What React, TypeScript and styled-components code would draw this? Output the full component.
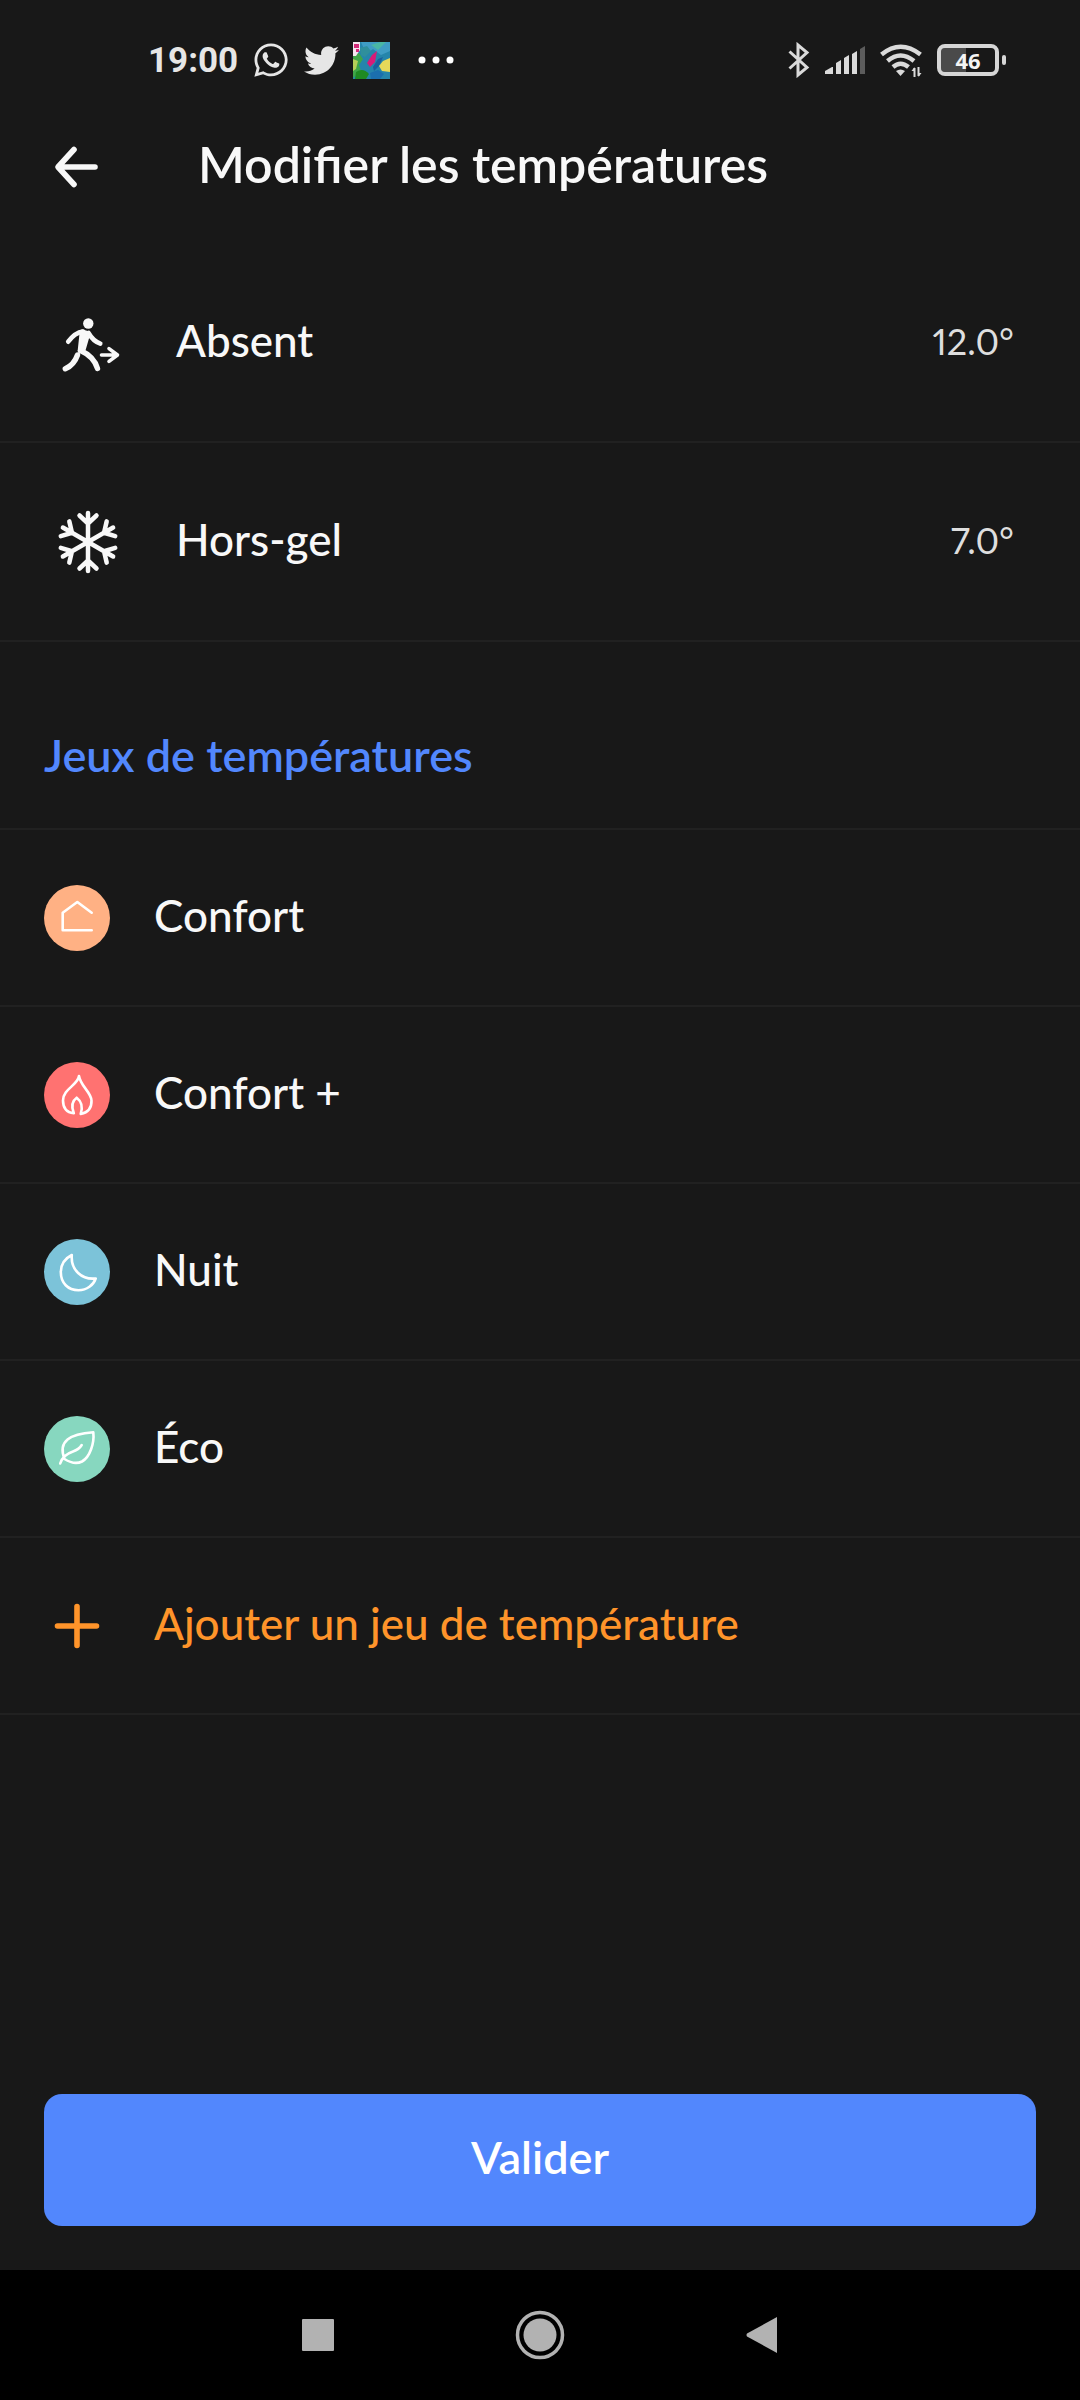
import React from "react";
import styled, { createGlobalStyle } from "styled-components";
import { FaTwitter, FaWhatsapp } from "react-icons/fa";

const GlobalStyle = createGlobalStyle`
  *, *::before, *::after { box-sizing: border-box; }
  html { background: #000; }
  body {
    margin: 0;
    background: #181818;
    color: #f8f8f8;
    font-family: Lato, "Open Sans", sans-serif;
  }
  button { font: inherit; color: inherit; background: none; border: 0; padding: 0; cursor: pointer; }
  ul { list-style: none; margin: 0; padding: 0; }
  svg { display: block; flex: none; }
`;

const Screen = styled.div`
  display: flex;
  flex-direction: column;
  min-height: 100vh;
`;

const StatusBar = styled.div`
  display: flex;
  align-items: center;
  justify-content: space-between;
  height: 120px;
  padding: 0 74px 0 148px;
  color: #e6e6e6;
`;

const StatusGroup = styled.div<{ $gap: number }>`
  display: flex;
  align-items: center;
  gap: ${(p) => p.$gap}px;
`;

const Clock = styled.time`
  padding-top: 2px;
  font: 700 35px/40px Roboto, sans-serif;
`;

const Overflow = styled.span`
  padding-left: 14px;
`;

const Battery = styled.div`
  display: flex;
  align-items: center;
  gap: 3px;
`;

const BatteryBody = styled.div`
  display: flex;
  align-items: center;
  justify-content: center;
  width: 62px;
  height: 32px;
  border: 4px solid #d6d6d6;
  border-radius: 8px;
  background: linear-gradient(90deg, #4a4a4a 46%, #181818 46%);
  background-clip: padding-box;
  font: 700 22px/24px "Noto Sans", sans-serif;
  color: #f4f4f4;
`;

const BatteryTip = styled.div`
  width: 4px;
  height: 10px;
  border-radius: 2px;
  background: #d6d6d6;
`;

const Header = styled.header`
  display: flex;
  align-items: center;
  gap: 88px;
  height: 94px;
  padding: 0 44px;
`;

const BackButton = styled.button`
  display: flex;
  width: 66px;
`;

const Title = styled.h1`
  margin: 0;
  padding-bottom: 6px;
  font-size: 50px;
  line-height: 56px;
  font-weight: 600;
`;

const PresetList = styled.ul`
  padding-top: 30px;
`;

const Item = styled.li`
  border-bottom: 2px solid #212121;
`;

const Row = styled.button<{ $tall?: boolean; $accent?: boolean }>`
  display: flex;
  align-items: center;
  gap: 44px;
  width: 100%;
  height: ${(p) => (p.$tall ? 197 : 175)}px;
  padding: 0 66px 0 44px;
  text-align: left;
  color: ${(p) => (p.$accent ? "#ff942a" : "inherit")};
`;

const Label = styled.span`
  flex: 1;
  padding-bottom: 6px;
  font-size: 44px;
  line-height: 50px;
  font-weight: 500;
`;

const Value = styled.span`
  padding-bottom: 4px;
  font-size: 36px;
  line-height: 50px;
  font-variant-numeric: proportional-nums;
  color: #dedede;
`;

const SectionTitle = styled.h2`
  margin: 0;
  padding: 88px 44px 48px;
  border-bottom: 2px solid #212121;
  font-size: 45px;
  line-height: 50px;
  font-weight: 600;
  color: #5287fd;
`;

const Badge = styled.span<{ $color: string }>`
  flex: none;
  border-radius: 50%;
  background: ${(p) => p.$color};
`;

const Footer = styled.footer`
  margin-top: auto;
  padding: 44px;
`;

const SubmitButton = styled.button`
  display: block;
  width: 100%;
  height: 132px;
  padding-bottom: 6px;
  border-radius: 18px;
  background: #5287fd;
  color: #fff;
  font-size: 45px;
  line-height: 50px;
  font-weight: 600;
`;

const NavBar = styled.nav`
  display: flex;
  align-items: center;
  justify-content: center;
  gap: 156px;
  height: 130px;
  background: #000;
`;

const NavButton = styled.button`
  display: flex;
  justify-content: center;
  width: 66px;
`;

const MapThumb = () => (
  <svg width="37" height="37" viewBox="0 0 37 37" aria-hidden="true">
    <rect width="37" height="37" fill="#2585ab" />
    <path d="M8 0h29v9l-9 4-8-6-7 5z" fill="#3f9cc4" />
    <path d="M18 3l9-3h6l-8 8z" fill="#49b6a4" />
    <path d="M7 6l7-2 4 5-6 6-4-2z" fill="#2f8f9c" />
    <path d="M0 13l6-2 4 6-4 6 2 6-8 7z" fill="#3fa548" />
    <path d="M0 17l5 2-2 8-3 2z" fill="#b6cf57" />
    <path d="M3 30q7-5 13 2l-3 5H2z" fill="#1f8a22" />
    <path d="M0 0h7v8l-4 6H0z" fill="#f4e6ef" />
    <path d="M1 2h5v4H1zM3 7h3v3H3z" fill="#d32a78" />
    <path d="M24 9l-5 4-5 8 3 4 5-5z" fill="#d81b78" />
    <path d="M20 25l5-8 5-2-4 9-5 5z" fill="#1a5f9e" />
    <path d="M30 19l7-3v14l-8-1-3-5z" fill="#e6d95a" />
    <path d="M17 31l8-3 6 4-4 5h-9z" fill="#1b6fae" />
  </svg>
);

const MoreDots = () => (
  <svg width="36" height="8" viewBox="0 0 36 8" fill="#fff" aria-hidden="true">
    <circle cx="4" cy="4" r="3.5" />
    <circle cx="18" cy="4" r="3.5" />
    <circle cx="32" cy="4" r="3.5" />
  </svg>
);

const BluetoothIcon = () => (
  <svg width="22" height="36" viewBox="0 0 22 36" fill="none" stroke="#dadada" strokeWidth="3" aria-hidden="true">
    <path d="M1.5 9.5L19 25.5 10 33V3l9 7.5L1.5 26.5" />
  </svg>
);

const SignalIcon = () => (
  <svg width="40" height="28" viewBox="0 0 40 28" fill="#dadada" aria-hidden="true">
    <path d="M0 28v-3l7-4h1v7zM11 17l5-3v14h-5zM19 12l5-3v19h-5zM27 8l5-3v23h-5z" />
    <path d="M35 3l5-3v28h-5z" fill="#5c5c5c" />
  </svg>
);

const WifiIcon = () => (
  <svg width="42" height="36" viewBox="0 0 42 36" fill="none" stroke="#dadada" strokeWidth="4.5" aria-hidden="true">
    <path d="M1.5 12.5Q20.5-3 40.5 12.5" />
    <path d="M7.5 19Q20.5 8 34 19" />
    <path d="M13 25Q20.5 18.5 28.5 25" />
    <path d="M16 29q4.5-3 9 0l-4.5 5z" fill="#dadada" stroke="none" />
    <path d="M34.5 26v9M38.5 25v9" strokeWidth="2" />
    <path d="M31.5 29l3-4v4zM41.5 31l-3 4v-4z" fill="#dadada" stroke="none" />
  </svg>
);

const BackArrow = () => (
  <svg width="66" height="66" viewBox="0 0 66 66" fill="none" stroke="#f8f8f8" strokeWidth="5.6" strokeLinecap="round" strokeLinejoin="round" aria-hidden="true">
    <path d="M51 33H15M30 15.5L14 33l16 17.5" />
  </svg>
);

const WalkerIcon = () => (
  <svg width="88" height="88" viewBox="0 0 88 88" fill="none" stroke="#f8f8f8" strokeWidth="4.6" strokeLinecap="round" strokeLinejoin="round" aria-hidden="true">
    <circle cx="44.3" cy="24.5" r="5.2" fill="#f8f8f8" stroke="none" />
    <path d="M24.2 42.7Q31 33.5 39 32.5M44.5 34Q49 42 56.3 44.6" />
    <path d="M38 32.8L44 34.5 39.5 50 36 51.5z" fill="#f8f8f8" />
    <path d="M36.5 51.5Q50 57.5 53.5 69.5M33.5 56Q30 66 21.3 69.8" strokeWidth="5.4" />
    <path d="M57.5 56H73M65 49.6L73.5 56l-8.5 6.4" strokeWidth="3.6" />
  </svg>
);

const SnowflakeIcon = () => (
  <svg width="88" height="88" viewBox="-44 -44 88 88" fill="none" stroke="#f8f8f8" strokeWidth="4.5" strokeLinecap="round" strokeLinejoin="round" aria-hidden="true">
    {[0, 60, 120, 180, 240, 300].map((angle) => (
      <path key={angle} d="M0 0V-29M-8.5-26.5L0-18.5 8.5-26.5" transform={`rotate(${angle})`} />
    ))}
  </svg>
);

const PRESET_PATHS = {
  house: "M47.7 27.7L33.3 17 18.7 27.7V45.3H47.7",
  flame:
    "M35 14C34 23 19 27 19 38.5C19 46 23 50.5 29.8 51.3C27 44 28 39 32.7 35.7C37 39 39 45 36.7 52C44 50.5 47.8 46 47.5 38.5C47 30 36.5 24 35 14z",
  moon: "M27.8 16C20 20 16.8 26 16.8 33C16.8 44 24 51.2 34.5 51.2C43 51.2 49.5 46 51.7 39.5C38 41 26.5 31 27.8 16z",
  leaf: "M16.2 47.5C18 41 23 37.5 29 35.5Q35 33.5 37.7 29M20.5 43C13.5 25 26 18 49.3 16.3C50.5 27 46 41 38 45.5C32 48.5 26 46.5 20.5 43",
};

const PresetIcon = ({ name, color }: { name: keyof typeof PRESET_PATHS; color: string }) => (
  <Badge $color={color}>
    <svg width="66" height="66" viewBox="0 0 66 66" fill="none" stroke="#fff" strokeWidth="2.6" strokeLinecap="round" strokeLinejoin="round" aria-hidden="true">
      <path d={PRESET_PATHS[name]} />
    </svg>
  </Badge>
);

const PlusIcon = () => (
  <svg width="66" height="66" viewBox="0 0 66 66" stroke="#ff942a" strokeWidth="5.6" strokeLinecap="round" aria-hidden="true">
    <path d="M33 13.5v39M13.5 33h39" />
  </svg>
);

const presets: { name: keyof typeof PRESET_PATHS; label: string; color: string }[] = [
  { name: "house", label: "Confort", color: "#ffb184" },
  { name: "flame", label: "Confort +", color: "#ff7271" },
  { name: "moon", label: "Nuit", color: "#7cc3d9" },
  { name: "leaf", label: "Éco", color: "#87d7bf" },
];

export default function App() {
  return (
    <Screen>
      <GlobalStyle />
      <StatusBar>
        <StatusGroup $gap={14}>
          <Clock>19:00</Clock>
          <FaWhatsapp size={38} />
          <FaTwitter size={35} />
          <MapThumb />
          <Overflow>
            <MoreDots />
          </Overflow>
        </StatusGroup>
        <StatusGroup $gap={15}>
          <BluetoothIcon />
          <SignalIcon />
          <WifiIcon />
          <Battery>
            <BatteryBody>46</BatteryBody>
            <BatteryTip />
          </Battery>
        </StatusGroup>
      </StatusBar>
      <Header>
        <BackButton type="button" aria-label="Retour">
          <BackArrow />
        </BackButton>
        <Title>Modifier les températures</Title>
      </Header>
      <main>
        <PresetList>
          <Item>
            <Row type="button" $tall>
              <WalkerIcon />
              <Label>Absent</Label>
              <Value>12.0°</Value>
            </Row>
          </Item>
          <Item>
            <Row type="button" $tall>
              <SnowflakeIcon />
              <Label>Hors-gel</Label>
              <Value>7.0°</Value>
            </Row>
          </Item>
        </PresetList>
        <SectionTitle>Jeux de températures</SectionTitle>
        <ul>
          {presets.map((preset) => (
            <Item key={preset.name}>
              <Row type="button">
                <PresetIcon name={preset.name} color={preset.color} />
                <Label>{preset.label}</Label>
              </Row>
            </Item>
          ))}
          <Item>
            <Row type="button" $accent>
              <PlusIcon />
              <Label>Ajouter un jeu de température</Label>
            </Row>
          </Item>
        </ul>
      </main>
      <Footer>
        <SubmitButton type="button">Valider</SubmitButton>
      </Footer>
      <NavBar>
        <NavButton type="button" aria-label="Applications récentes">
          <svg width="32" height="32" viewBox="0 0 32 32" aria-hidden="true">
            <rect width="32" height="32" rx="1" fill="#b2b2b2" />
          </svg>
        </NavButton>
        <NavButton type="button" aria-label="Accueil">
          <svg width="50" height="50" viewBox="0 0 50 50" aria-hidden="true">
            <circle cx="25" cy="25" r="22.5" fill="none" stroke="#b2b2b2" strokeWidth="3.5" />
            <circle cx="25" cy="25" r="16.5" fill="#b2b2b2" />
          </svg>
        </NavButton>
        <NavButton type="button" aria-label="Précédent">
          <svg width="32" height="36" viewBox="0 0 32 36" aria-hidden="true">
            <path d="M31 0v36L1 19.5q-1-1.5 0-3z" fill="#b2b2b2" />
          </svg>
        </NavButton>
      </NavBar>
    </Screen>
  );
}
